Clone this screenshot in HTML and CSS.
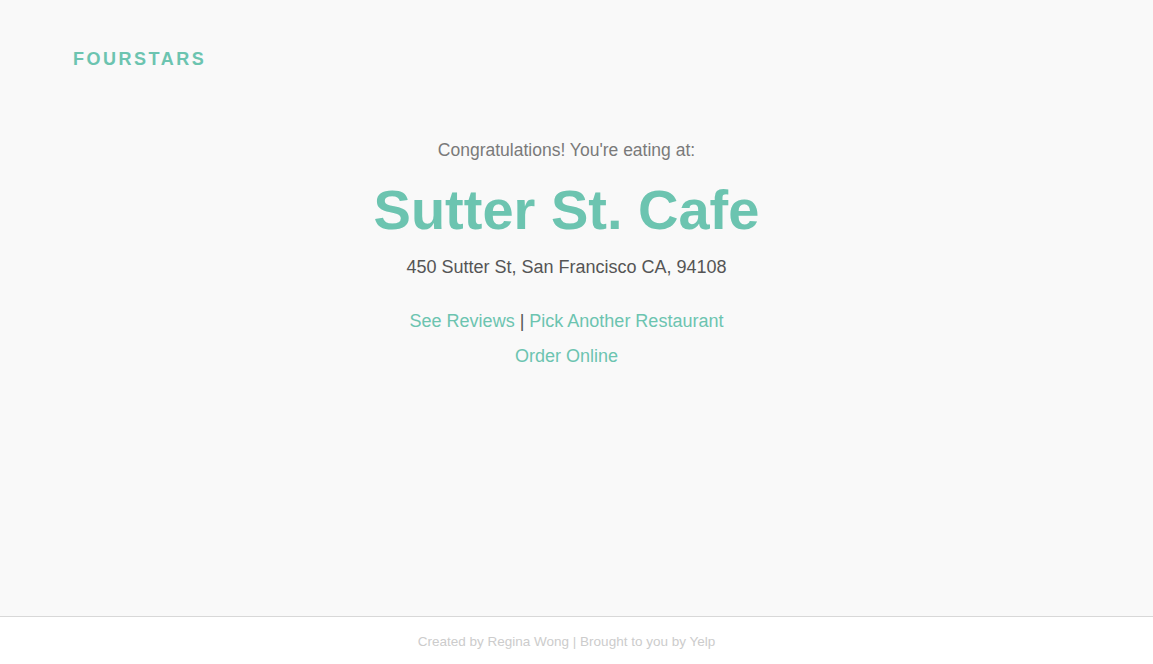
FILE: index.html
```html
<!DOCTYPE html>
<html>
<head>
<meta charset="utf-8">
<link rel="stylesheet" href="styles.css">
</head>
<body>
<div class="page">
  <header class="header">
    <div class="logo">FOURSTARS</div>
  </header>
  <main class="main">
    <p class="intro">Congratulations! You're eating at:</p>
    <h1 class="name">Sutter St. Cafe</h1>
    <p class="address">450 Sutter St, San Francisco CA, 94108</p>
    <p class="links"><a href="#">See Reviews</a> | <a href="#">Pick Another Restaurant</a></p>
    <p class="links second"><a href="#">Order Online</a></p>
  </main>
</div>
<footer class="footer">Created by Regina Wong | Brought to you by Yelp</footer>
</body>
</html>
```
FILE: styles.css
```css
html, body {
  margin: 0;
  padding: 0;
  height: 100%;
}
body {
  font-family: "Liberation Sans", Arial, sans-serif;
  background: #fff;
  display: flex;
  flex-direction: column;
}
.page {
  background: #f9f9f9;
  height: 616px;
  border-bottom: 1px solid #d8d8d8;
}
.header {
  padding: 49px 0 0 73px;
}
.logo {
  color: #6cc4b0;
  font-size: 18px;
  font-weight: bold;
  letter-spacing: 2.5px;
  line-height: 20px;
}
.main {
  text-align: center;
  padding: 70px 20px 0 0;
}
.intro {
  margin: 0;
  color: #7a7a7a;
  font-size: 17.5px;
  line-height: 22px;
}
.name {
  margin: 17px 0 0;
  color: #6cc4b0;
  font-size: 56px;
  line-height: 64px;
  font-weight: bold;
}
.address {
  margin: 14px 0 0;
  color: #555;
  font-size: 18px;
  line-height: 22px;
}
.links {
  margin: 32px 0 0;
  color: #555;
  font-size: 18px;
  line-height: 22px;
}
.links.second {
  margin-top: 13px;
}
.links a {
  color: #6cc4b0;
  text-decoration: none;
}
.footer {
  text-align: center;
  color: #cccccc;
  font-size: 13.5px;
  padding: 17px 20px 0 0;
}
```
